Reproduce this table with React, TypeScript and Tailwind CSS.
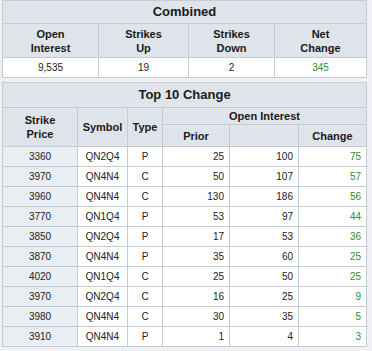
import React from 'react';

const rows = [
  { strike: '3360', symbol: 'QN2Q4', type: 'P', prior: 25, now: 100, change: 75 },
  { strike: '3970', symbol: 'QN4N4', type: 'C', prior: 50, now: 107, change: 57 },
  { strike: '3960', symbol: 'QN4N4', type: 'C', prior: 130, now: 186, change: 56 },
  { strike: '3770', symbol: 'QN1Q4', type: 'P', prior: 53, now: 97, change: 44 },
  { strike: '3850', symbol: 'QN2Q4', type: 'P', prior: 17, now: 53, change: 36 },
  { strike: '3870', symbol: 'QN4N4', type: 'P', prior: 35, now: 60, change: 25 },
  { strike: '4020', symbol: 'QN1Q4', type: 'C', prior: 25, now: 50, change: 25 },
  { strike: '3970', symbol: 'QN2Q4', type: 'C', prior: 16, now: 25, change: 9 },
  { strike: '3980', symbol: 'QN4N4', type: 'C', prior: 30, now: 35, change: 5 },
  { strike: '3910', symbol: 'QN4N4', type: 'P', prior: 1, now: 4, change: 3 },
];

const th = 'border border-[#c6ccd4] bg-[#dfe4eb] font-bold text-[11px] leading-[14px] text-[#1a1a1a] text-center';
const td = 'border border-[#c6ccd4] h-[20px] text-[10px] px-[5px] py-0';
const dark = 'text-[#222222]';
const green = 'text-[#2f8a34]';

export default function App() {
  return (
    <div className="w-[372px] h-[351px] bg-[#eef0f3] pl-[2px] pr-[6px] font-['Liberation_Sans']">
      <table className="w-[364px] table-fixed border-collapse border border-[#c6ccd4]">
        <colgroup>
          <col className="w-[96px]" />
          <col className="w-[90px]" />
          <col className="w-[86px]" />
          <col className="w-[92px]" />
        </colgroup>
        <thead>
          <tr>
            <th colSpan={4} className={`${th} h-[23px] text-[13px]`}>Combined</th>
          </tr>
          <tr>
            <th className={`${th} h-[34px]`}>Open<br />Interest</th>
            <th className={th}>Strikes<br />Up</th>
            <th className={th}>Strikes<br />Down</th>
            <th className={th}>Net<br />Change</th>
          </tr>
        </thead>
        <tbody>
          <tr>
            <td className={`${td} ${dark} bg-white text-center`}>9,535</td>
            <td className={`${td} ${dark} bg-white text-center`}>19</td>
            <td className={`${td} ${dark} bg-white text-center`}>2</td>
            <td className={`${td} ${green} bg-white text-center`}>345</td>
          </tr>
        </tbody>
      </table>

      <table className="mt-[4px] w-[364px] table-fixed border-collapse border border-[#c6ccd4]">
        <colgroup>
          <col className="w-[75px]" />
          <col className="w-[50px]" />
          <col className="w-[35px]" />
          <col className="w-[67px]" />
          <col className="w-[69px]" />
          <col className="w-[68px]" />
        </colgroup>
        <thead>
          <tr>
            <th colSpan={6} className={`${th} h-[25px] text-[13px]`}>Top 10 Change</th>
          </tr>
          <tr>
            <th rowSpan={2} className={th}>Strike<br />Price</th>
            <th rowSpan={2} className={th}>Symbol</th>
            <th rowSpan={2} className={th}>Type</th>
            <th colSpan={3} className={`${th} h-[17px]`}>Open Interest</th>
          </tr>
          <tr>
            <th className={`${th} h-[22px]`}>Prior</th>
            <th className={th}></th>
            <th className={th}>Change</th>
          </tr>
        </thead>
        <tbody>
          {rows.map((r, i) => (
            <tr key={i}>
              <td className={`${td} ${dark} text-center bg-[#e9eef5]`}>{r.strike}</td>
              <td className={`${td} ${dark} text-center bg-white`}>{r.symbol}</td>
              <td className={`${td} ${dark} text-center bg-white`}>{r.type}</td>
              <td className={`${td} ${dark} text-right bg-white`}>{r.prior}</td>
              <td className={`${td} ${dark} text-right bg-white`}>{r.now}</td>
              <td className={`${td} ${green} text-right bg-white`}>{r.change}</td>
            </tr>
          ))}
        </tbody>
      </table>
    </div>
  );
}
